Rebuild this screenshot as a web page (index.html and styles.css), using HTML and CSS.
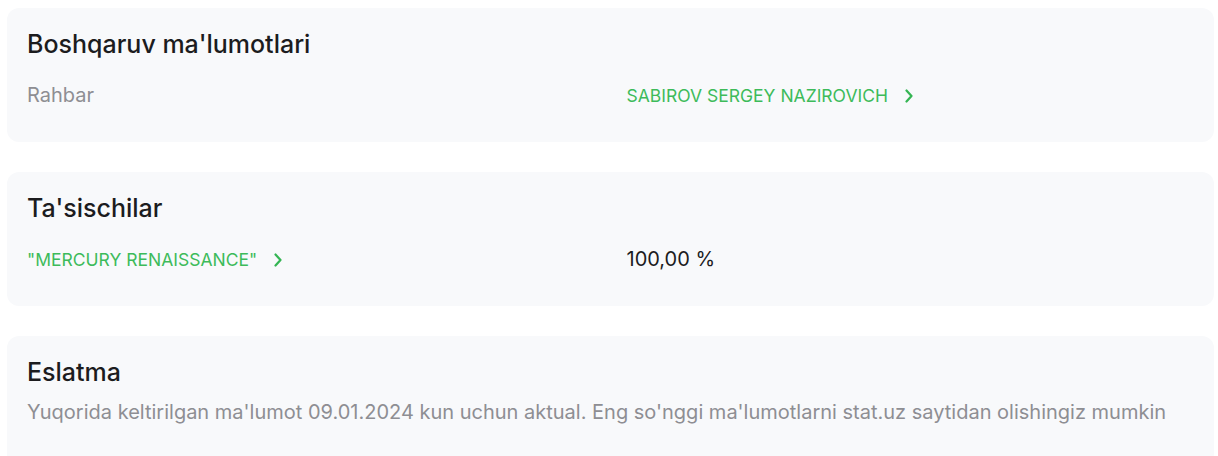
FILE: index.html
```html
<!DOCTYPE html>
<html lang="uz">
<head>
<meta charset="utf-8">
<link rel="stylesheet" href="styles.css">
</head>
<body>
<div class="page">
  <section class="card">
    <h2 class="card-title">Boshqaruv ma'lumotlari</h2>
    <div class="row">
      <div class="label">Rahbar</div>
      <a class="link" href="#">SABIROV SERGEY NAZIROVICH
        <svg class="chev" width="8" height="14" viewBox="0 0 8 14"><path d="M1.5 1.5 L6.5 7 L1.5 12.5" fill="none" stroke="currentColor" stroke-width="2.2" stroke-linecap="round" stroke-linejoin="round"/></svg>
      </a>
    </div>
  </section>
  <section class="card">
    <h2 class="card-title">Ta'sischilar</h2>
    <div class="row">
      <a class="link" href="#">"MERCURY RENAISSANCE"
        <svg class="chev" width="8" height="14" viewBox="0 0 8 14"><path d="M1.5 1.5 L6.5 7 L1.5 12.5" fill="none" stroke="currentColor" stroke-width="2.2" stroke-linecap="round" stroke-linejoin="round"/></svg>
      </a>
      <div class="value">100,00 %</div>
    </div>
  </section>
  <section class="card card-note">
    <h2 class="card-title">Eslatma</h2>
    <p class="note">Yuqorida keltirilgan ma'lumot 09.01.2024 kun uchun aktual. Eng so'nggi ma'lumotlarni stat.uz saytidan olishingiz mumkin</p>
  </section>
</div>
</body>
</html>
```
FILE: styles.css
```css
* { box-sizing: border-box; }
html, body { margin: 0; padding: 0; background: #ffffff; }
body { font-family: Inter, "Noto Sans", sans-serif; }
.page {
  display: flex;
  flex-direction: column;
  gap: 30px;
  padding: 8px 4px 0 7px;
}
.card {
  background: #f8f9fb;
  border-radius: 12px;
  padding: 20px 20px 36px 20px;
}
.card-title {
  margin: 0;
  font-size: 25px;
  line-height: 32px;
  font-weight: 500;
  color: #1c1c1e;
}
.row {
  display: grid;
  grid-template-columns: 1fr 1fr;
  column-gap: 32px;
  margin-top: 22px;
  align-items: center;
  height: 24px;
}
.label {
  font-size: 20px;
  line-height: 24px;
  color: #8e8e93;
}
.value {
  font-size: 20px;
  line-height: 24px;
  color: #1c1c1e;
}
.link {
  display: flex;
  align-items: center;
  gap: 17px;
  padding-top: 2px;
  font-size: 17.5px;
  line-height: 24px;
  color: #3dbb5a;
  text-decoration: none;
}
.chev { display: block; color: #34b553; }
.card-note { padding-bottom: 40px; }
.note {
  margin: 10px 0 0 0;
  font-size: 20px;
  line-height: 28px;
  color: #8e8e93;
}
```
